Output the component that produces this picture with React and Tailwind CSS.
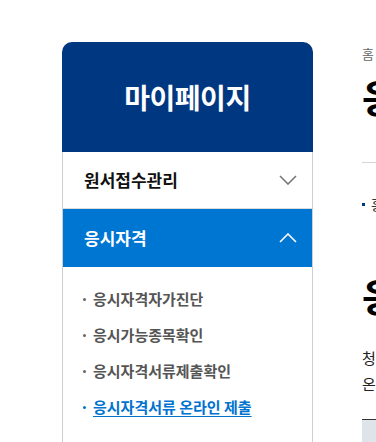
import React from "react";

const font = { fontFamily: '"Noto Sans CJK KR", "Noto Sans", sans-serif' };

function Chevron({ up, color }) {
  return (
    <svg width="18" height="10" viewBox="0 0 18 10" fill="none">
      {up ? (
        <polyline points="1,9 9,1 17,9" stroke={color} strokeWidth="1.6" />
      ) : (
        <polyline points="1,1 9,9 17,1" stroke={color} strokeWidth="1.6" />
      )}
    </svg>
  );
}

function SubItem({ children, active }) {
  return (
    <li className="flex items-center h-[36px] shrink-0">
      <span
        className={`w-[3px] h-[3px] rounded-full mr-[7px] ${active ? "bg-[#0073cf]" : "bg-[#666]"}`}
      />
      <span
        className={`text-[15px] font-semibold ${active ? "text-[#0073cf] underline underline-offset-[3px]" : "text-[#555]"}`}
      >
        {children}
      </span>
    </li>
  );
}

export default function App() {
  return (
    <div
      className="w-[376px] h-[442px] overflow-hidden bg-white flex items-start pt-[42px] pl-[62px] gap-[49px]"
      style={font}
    >
      <aside className="w-[251px] h-[420px] shrink-0 flex flex-col">
        <div className="h-[110px] shrink-0 bg-[#003781] rounded-t-[10px] flex items-center justify-center">
          <h1 className="text-white text-[28px] font-bold tracking-[-0.5px]">마이페이지</h1>
        </div>
        <div className="border-x border-[#cfcfcf] flex-1 flex flex-col">
          <div className="h-[57px] shrink-0 flex items-center justify-between pl-[21px] pr-[15px] border-b border-[#dcdcdc]">
            <span className="text-[17px] font-bold text-[#111]">원서접수관리</span>
            <Chevron color="#777" />
          </div>
          <div className="h-[58px] shrink-0 flex items-center justify-between pl-[21px] pr-[15px] bg-[#0076d3]">
            <span className="text-[17px] font-bold text-white">응시자격</span>
            <Chevron up color="#fff" />
          </div>
          <ul className="pl-[20px] pt-[14px] flex flex-col">
            <SubItem>응시자격자가진단</SubItem>
            <SubItem>응시가능종목확인</SubItem>
            <SubItem>응시자격서류제출확인</SubItem>
            <SubItem active>응시자격서류 온라인 제출</SubItem>
          </ul>
        </div>
      </aside>
      <main className="w-[700px] shrink-0 flex flex-col pt-px">
        <div className="h-[22px] shrink-0 flex items-center text-[13px] text-[#666]">홈 &gt; 마이페이지 &gt; 응시자격</div>
        <h2 className="mt-[7px] h-[48px] shrink-0 flex items-center text-[39px] font-bold text-black tracking-[-1px]">
          응시자격서류 온라인 제출
        </h2>
        <div className="mt-[42px] h-px shrink-0 bg-[#d5d5d5]" />
        <div className="mt-[30px] h-[22px] shrink-0 flex items-center text-[14px] text-[#333]">
          <span className="w-[3px] h-[3px] bg-[#003781] mr-[6px]" />
          홍길동님의 응시자격서류 제출 현황입니다.
        </div>
        <h3 className="mt-[56px] h-[48px] shrink-0 flex items-center text-[39px] font-bold text-black tracking-[-1px]">
          응시자격서류 제출 안내
        </h3>
        <div className="mt-[26px] shrink-0 flex flex-col text-[15px] text-[#222]">
          <span className="h-[26px] flex items-center">청년 응시자는 응시자격 증빙서류를 제출하여야 합니다.</span>
          <span className="h-[26px] flex items-center">온라인으로 서류를 제출할 수 있습니다.</span>
        </div>
        <div className="mt-[22px] h-px shrink-0 bg-[#333]" />
        <div className="h-[40px] shrink-0 bg-[#dfe3ea]" />
      </main>
    </div>
  );
}
